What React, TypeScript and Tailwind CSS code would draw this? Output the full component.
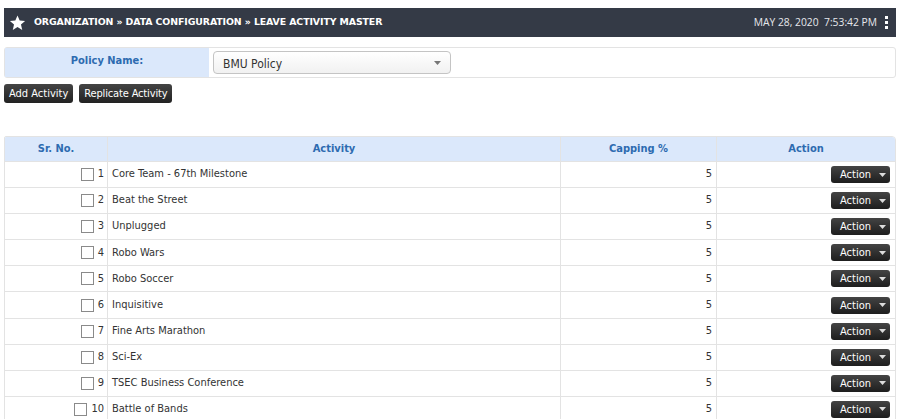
import React from "react";

const rows = [
  "Core Team - 67th Milestone",
  "Beat the Street",
  "Unplugged",
  "Robo Wars",
  "Robo Soccer",
  "Inquisitive",
  "Fine Arts Marathon",
  "Sci-Ex",
  "TSEC Business Conference",
  "Battle of Bands",
];

const body = { fontFamily: '"DejaVu Sans Condensed", "DejaVu Sans", sans-serif' };

function Caret({ className }: { className?: string }) {
  return (
    <svg width="7" height="4" viewBox="0 0 7 4" className={className}>
      <path d="M0 0 H7 L3.5 4 Z" fill="currentColor" />
    </svg>
  );
}

export default function App() {
  return (
    <div className="w-[900px] h-[419px] overflow-hidden bg-white px-[4px] pt-[8px]" style={body}>
      {/* header */}
      <div className="h-[29px] bg-[#343a46] flex items-center pl-[5px] pr-[8px] text-white">
        <svg width="17" height="16" viewBox="0 0 24 23" className="mr-[8px]">
          <path
            d="M12 0.8 L15.1 8 L22.9 8.6 L17 13.7 L18.8 21.4 L12 17.3 L5.2 21.4 L7 13.7 L1.1 8.6 L8.9 8 Z"
            fill="white"
          />
        </svg>
        <span className="text-[9.4px] font-bold tracking-[-0.1px]" style={{ fontFamily: '"DejaVu Sans", sans-serif' }}>
          ORGANIZATION » DATA CONFIGURATION » LEAVE ACTIVITY MASTER
        </span>
        <span
          className="ml-auto text-[10.3px] text-[#e6e8ec] whitespace-pre"
          style={{ fontFamily: '"Open Sans", sans-serif' }}
        >
          MAY 28, 2020{"  "}7:53:42 PM
        </span>
        <span className="ml-[8px] flex flex-col gap-[2px]">
          <span className="w-[3px] h-[3px] bg-white" />
          <span className="w-[3px] h-[3px] bg-white" />
          <span className="w-[3px] h-[3px] bg-white" />
        </span>
      </div>

      {/* policy row */}
      <div className="mt-[10px] h-[31px] border border-[#e3e3e3] rounded-[3px] flex">
        <div className="w-[204px] bg-[#dbe8fb] flex items-center justify-center text-[11px] font-bold text-[#2d6bb0] pb-[3px]">
          Policy Name:
        </div>
        <div className="flex items-center pl-[4px]">
          <div className="w-[238px] h-[23px] border border-[#c4c4c4] rounded-[4px] bg-gradient-to-b from-white to-[#f1f1f1] flex items-center pl-[9px] pr-[9px] text-[12px] text-[#333]">
            <span className="pt-[2px]">BMU Policy</span>
            <Caret className="ml-auto text-[#777]" />
          </div>
        </div>
      </div>

      {/* buttons */}
      <div className="mt-[6px] flex gap-[6px]">
        <button className="h-[19px] px-[5px] rounded-[3px] bg-gradient-to-b from-[#444] to-[#222] text-white text-[11px] leading-none">
          Add Activity
        </button>
        <button className="h-[19px] px-[5px] rounded-[3px] bg-gradient-to-b from-[#444] to-[#222] text-white text-[11px] leading-none tracking-[-0.15px]">
          Replicate Activity
        </button>
      </div>

      {/* table */}
      <div className="mt-[33px] border border-[#e3e3e3] rounded-tr-[4px] rounded-tl-[2px] overflow-hidden">
        <div className="grid grid-cols-[103px_453px_156px_1fr] h-[24px] bg-[#dbe8fb] text-[11px] font-bold text-[#2d6bb0]">
          <div className="flex items-center justify-center border-r border-[#e3e3e3]">Sr. No.</div>
          <div className="flex items-center justify-center border-r border-[#e3e3e3]">Activity</div>
          <div className="flex items-center justify-center border-r border-[#e3e3e3]">Capping %</div>
          <div className="flex items-center justify-center">Action</div>
        </div>
        {rows.map((r, i) => (
          <div
            key={r}
            className="grid grid-cols-[103px_453px_156px_1fr] h-[26.1px] border-t border-[#e3e3e3] text-[11px] text-[#333]"
          >
            <div className="flex items-center justify-end pr-[3px] border-r border-[#e3e3e3] gap-[4px]">
              <span className="w-[13px] h-[13px] border border-[#8a8a8a] bg-white" />
              <span>{i + 1}</span>
            </div>
            <div className="flex items-center pl-[4px] border-r border-[#e3e3e3]">{r}</div>
            <div className="flex items-center justify-end pr-[4px] border-r border-[#e3e3e3]">5</div>
            <div className="flex items-center justify-end pr-[5px]">
              <button className="w-[59px] h-[17px] rounded-[3px] bg-gradient-to-b from-[#444] to-[#1e1e1e] text-white text-[11px] flex items-center pl-[9px] gap-[8px] leading-none">
                Action
                <Caret className="text-[#ddd]" />
              </button>
            </div>
          </div>
        ))}
      </div>
    </div>
  );
}
